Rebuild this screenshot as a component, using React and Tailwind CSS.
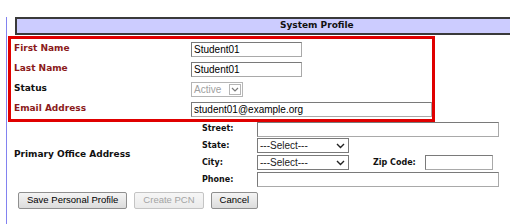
import React from "react";

const lbl = "font-['DejaVu_Sans',sans-serif] font-bold";
const inp =
  "h-[15px] border border-[#a9a9a9] border-t-[#7a7a7a] border-l-[#7a7a7a] bg-white px-[2px] text-[10px] leading-[13px] text-black font-['Liberation_Sans',Arial,sans-serif]";

function Chevron() {
  return (
    <svg width="9" height="6" viewBox="0 0 9 6" className="shrink-0">
      <path d="M1 1 L4.5 4.5 L8 1" fill="none" stroke="#222" strokeWidth="1.4" />
    </svg>
  );
}

function SelectBox({ width }) {
  return (
    <div
      className={`${width} h-[15px] border border-[#7a7a7a] bg-white flex items-center justify-between pl-[2px] pr-[3px] text-[10px] font-['Liberation_Sans',Arial,sans-serif] text-[#222]`}
    >
      <span>---Select---</span>
      <Chevron />
    </div>
  );
}

function Btn({ children, disabled }) {
  return (
    <div
      className={`h-[17px] px-[8px] flex items-center rounded-[2px] border text-[9.5px] font-['Liberation_Sans',Arial,sans-serif] bg-gradient-to-b ${
        disabled
          ? "border-[#c4c4c4] from-[#f6f6f6] to-[#ebebeb] text-[#a3a3a3]"
          : "border-[#8f8f8f] from-[#f4f4f4] to-[#dcdcdc] text-black"
      }`}
    >
      {children}
    </div>
  );
}

export default function App() {
  const rows = [
    { label: "First Name", red: true, value: "Student01" },
    { label: "Last Name", red: true, value: "Student01" },
    { label: "Status", red: false, status: true },
    { label: "Email Address", red: true, value: "student01@example.org", wide: true },
  ];

  return (
    <div className="w-[525px] h-[224px] bg-white overflow-hidden">
      <div className="ml-[6px] h-[219px] border-l border-[#8282f0]">
        {/* header */}
        <div className="ml-[8px] mt-[17px] w-[495px] h-[18px] border-y-2 border-l-2 border-[#3a3a3a] bg-[#ccccff] flex items-center pl-[263px]">
          <span className={`${lbl} text-[9px] text-[#111]`}>System Profile</span>
        </div>

        {/* highlighted block */}
        <div className="ml-[1px] mt-[1px] w-[427px] border-[3px] border-[#e00000] pl-[3px]">
          {rows.map((r) => (
            <div key={r.label} className="h-[20px] flex items-center">
              <div className={`${lbl} text-[9px] w-[177px] ${r.red ? "text-[#8b1a1a]" : "text-[#111]"}`}>
                {r.label}
              </div>
              {r.status ? (
                <div className="w-[52px] h-[15px] border border-[#b5b5b5] bg-white flex items-center justify-between pl-[2px] pr-[1px] text-[10px] font-['Liberation_Sans',Arial,sans-serif] text-[#a0a0a0]">
                  <span>Active</span>
                  <div className="w-[12px] h-[11px] border border-[#b5b5b5] flex items-center justify-center">
                    <svg width="8" height="5" viewBox="0 0 8 5">
                      <path d="M1 1 L4 4 L7 1" fill="none" stroke="#7a7a7a" strokeWidth="1.2" />
                    </svg>
                  </div>
                </div>
              ) : (
                <div className={`${inp} ${r.wide ? "w-[241px]" : "w-[111px]"}`}>{r.value}</div>
              )}
            </div>
          ))}
        </div>

        {/* address */}
        <div className="-mt-[1px] flex">
          <div className="w-[195px] pl-[7px] flex items-center">
            <span className={`${lbl} text-[9px] text-[#111]`}>Primary Office Address</span>
          </div>
          <div className="flex flex-col">
            <div className="h-[16px] flex items-center">
              <span className={`${lbl} text-[8px] text-[#111] w-[55px]`}>Street:</span>
              <div className={`${inp} w-[242px]`}></div>
            </div>
            <div className="h-[17px] flex items-center">
              <span className={`${lbl} text-[8px] text-[#111] w-[55px]`}>State:</span>
              <SelectBox width="w-[92px]" />
            </div>
            <div className="h-[17px] flex items-center">
              <span className={`${lbl} text-[8px] text-[#111] w-[55px]`}>City:</span>
              <SelectBox width="w-[92px]" />
              <span className={`${lbl} text-[8px] text-[#111] ml-[24px] w-[52px]`}>Zip Code:</span>
              <div className={`${inp} w-[68px]`}></div>
            </div>
            <div className="h-[17px] flex items-center">
              <span className={`${lbl} text-[8px] text-[#111] w-[55px]`}>Phone:</span>
              <div className={`${inp} w-[242px]`}></div>
            </div>
          </div>
        </div>

        {/* buttons */}
        <div className="ml-[11px] mt-[4px] flex gap-[7px]">
          <Btn>Save Personal Profile</Btn>
          <Btn disabled>Create PCN</Btn>
          <Btn>Cancel</Btn>
        </div>
      </div>
    </div>
  );
}
